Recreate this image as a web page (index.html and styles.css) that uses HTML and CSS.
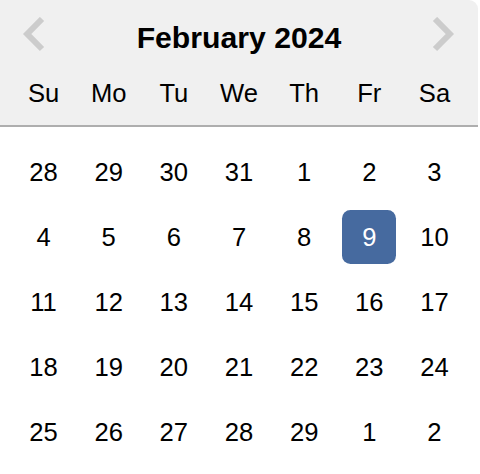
FILE: index.html
```html
<!DOCTYPE html>
<html>
<head>
<meta charset="utf-8">
<link rel="stylesheet" href="styles.css">
</head>
<body>
<div class="calendar">
  <div class="header">
    <button class="nav nav-prev" aria-label="Previous Month">
      <svg width="30" height="40" viewBox="0 0 30 40"><polyline points="21,2 6.2,17 21,32" fill="none" stroke="#cccccc" stroke-width="6" stroke-linejoin="miter" stroke-linecap="butt"/></svg>
    </button>
    <div class="title">February 2024</div>
    <button class="nav nav-next" aria-label="Next Month">
      <svg width="30" height="40" viewBox="0 0 30 40"><polyline points="9,2 23.8,17 9,32" fill="none" stroke="#cccccc" stroke-width="6" stroke-linejoin="miter" stroke-linecap="butt"/></svg>
    </button>
    <div class="day-names">
      <div class="day-name">Su</div>
      <div class="day-name">Mo</div>
      <div class="day-name">Tu</div>
      <div class="day-name">We</div>
      <div class="day-name">Th</div>
      <div class="day-name">Fr</div>
      <div class="day-name">Sa</div>
    </div>
  </div>
  <div class="month">
    <div class="week">
      <div class="day">28</div><div class="day">29</div><div class="day">30</div><div class="day">31</div><div class="day">1</div><div class="day">2</div><div class="day">3</div>
    </div>
    <div class="week">
      <div class="day">4</div><div class="day">5</div><div class="day">6</div><div class="day">7</div><div class="day">8</div><div class="day selected">9</div><div class="day">10</div>
    </div>
    <div class="week">
      <div class="day">11</div><div class="day">12</div><div class="day">13</div><div class="day">14</div><div class="day">15</div><div class="day">16</div><div class="day">17</div>
    </div>
    <div class="week">
      <div class="day">18</div><div class="day">19</div><div class="day">20</div><div class="day">21</div><div class="day">22</div><div class="day">23</div><div class="day">24</div>
    </div>
    <div class="week">
      <div class="day">25</div><div class="day">26</div><div class="day">27</div><div class="day">28</div><div class="day">29</div><div class="day">1</div><div class="day">2</div>
    </div>
  </div>
</div>
</body>
</html>
```
FILE: styles.css
```css
html, body {
  margin: 0;
  padding: 0;
  background: #ffffff;
}
body {
  font-family: "Liberation Sans", Arial, sans-serif;
  color: #000000;
}
.calendar {
  width: 478px;
  background: #ffffff;
}
.header {
  position: relative;
  background: #f0f0f0;
  border-bottom: 2px solid #aeaeae;
  border-top-right-radius: 9px;
  padding-top: 19.5px;
  height: 105.5px;
}
.title {
  font-size: 30.2px;
  font-weight: bold;
  line-height: 36px;
  text-align: center;
}
.nav {
  position: absolute;
  top: 17px;
  background: none;
  border: none;
  padding: 0;
  margin: 0;
  width: 30px;
  height: 40px;
  cursor: pointer;
}
.nav svg {
  display: block;
}
.nav-prev {
  left: 21px;
}
.nav-next {
  left: 426px;
}
.day-names {
  display: flex;
  justify-content: center;
  margin-top: 5px;
}
.day-name {
  width: 54px;
  margin: 5.585px;
  line-height: 54px;
  height: 54px;
  font-size: 25.6px;
  text-align: center;
}
.month {
  margin: 12.2px 0;
}
.week {
  display: flex;
  justify-content: center;
}
.day {
  width: 54px;
  height: 54px;
  line-height: 54px;
  margin: 5.585px;
  font-size: 25.6px;
  text-align: center;
  border-radius: 8.5px;
}
.day.selected {
  background: #466a9f;
  color: #ffffff;
}
```
